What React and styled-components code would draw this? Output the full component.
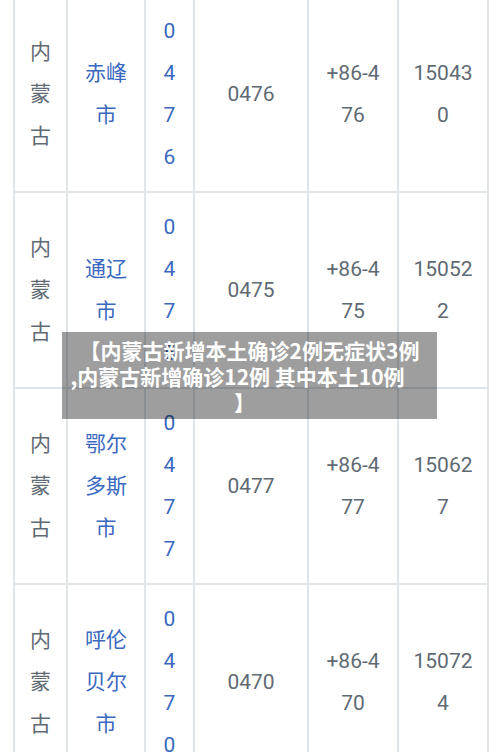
import React from 'react'
import styled, { createGlobalStyle } from 'styled-components'

const GlobalStyle = createGlobalStyle`
  html, body {
    margin: 0;
    padding: 0;
    background: #fff;
  }
  body {
    width: 500px;
    height: 752px;
    overflow: hidden;
  }
`

const rows = [
  { province: '内蒙古', city: '赤峰市', code: '0476', phone: '+86-476', post: '150430' },
  { province: '内蒙古', city: '通辽市', code: '0475', phone: '+86-475', post: '150522' },
  { province: '内蒙古', city: '鄂尔多斯市', code: '0477', phone: '+86-477', post: '150627' },
  { province: '内蒙古', city: '呼伦贝尔市', code: '0470', phone: '+86-470', post: '150724' },
]

const colWidths = [53, 78, 49, 114, 90, 90]

const Page = styled.div`
  position: relative;
  width: 500px;
  height: 752px;
  overflow: hidden;
`

const Table = styled.table`
  margin: -5px 0 0 13px;
  width: 474px;
  table-layout: fixed;
  border-collapse: collapse;
  font-family: Roboto, 'Noto Sans CJK SC', sans-serif;
  font-size: 21px;
  line-height: 42px;
  color: #5f6a73;
`

const Cell = styled.td`
  padding: 13px 14px;
  border: 2px solid #e0e5e9;
  text-align: center;
  vertical-align: middle;
  word-break: break-all;
  color: ${(p) => (p.$link ? '#3a69bf' : '#5f6a73')};
`

const Banner = styled.div`
  position: absolute;
  left: 62px;
  top: 332px;
  width: 375px;
  height: 87px;
  box-sizing: border-box;
  padding-top: 5px;
  background: rgba(0, 0, 0, 0.38);
  color: #fff;
  font-family: 'Noto Sans CJK SC', sans-serif;
  font-weight: 700;
  font-size: 21px;
  line-height: 26px;
  text-align: center;
  white-space: nowrap;
`

const BannerLine = styled.div`
  padding-right: ${(p) => p.$shift || 0}px;
`

const App = () => {
  return (
    <Page>
      <GlobalStyle />
      <Table>
        <colgroup>
          {colWidths.map((w, i) => (
            <col key={i} style={{ width: w }} />
          ))}
        </colgroup>
        <tbody>
          {rows.map((r) => (
            <tr key={r.city}>
              <Cell>{r.province}</Cell>
              <Cell $link>{r.city}</Cell>
              <Cell $link>{r.code}</Cell>
              <Cell>{r.code}</Cell>
              <Cell>{r.phone}</Cell>
              <Cell>{r.post}</Cell>
            </tr>
          ))}
        </tbody>
      </Table>
      <Banner>
        <BannerLine>【内蒙古新增本土确诊2例无症状3例</BannerLine>
        <BannerLine $shift={24}>,内蒙古新增确诊12例 其中本土10例</BannerLine>
        <BannerLine $shift={10}>】</BannerLine>
      </Banner>
    </Page>
  )
}

export default App
